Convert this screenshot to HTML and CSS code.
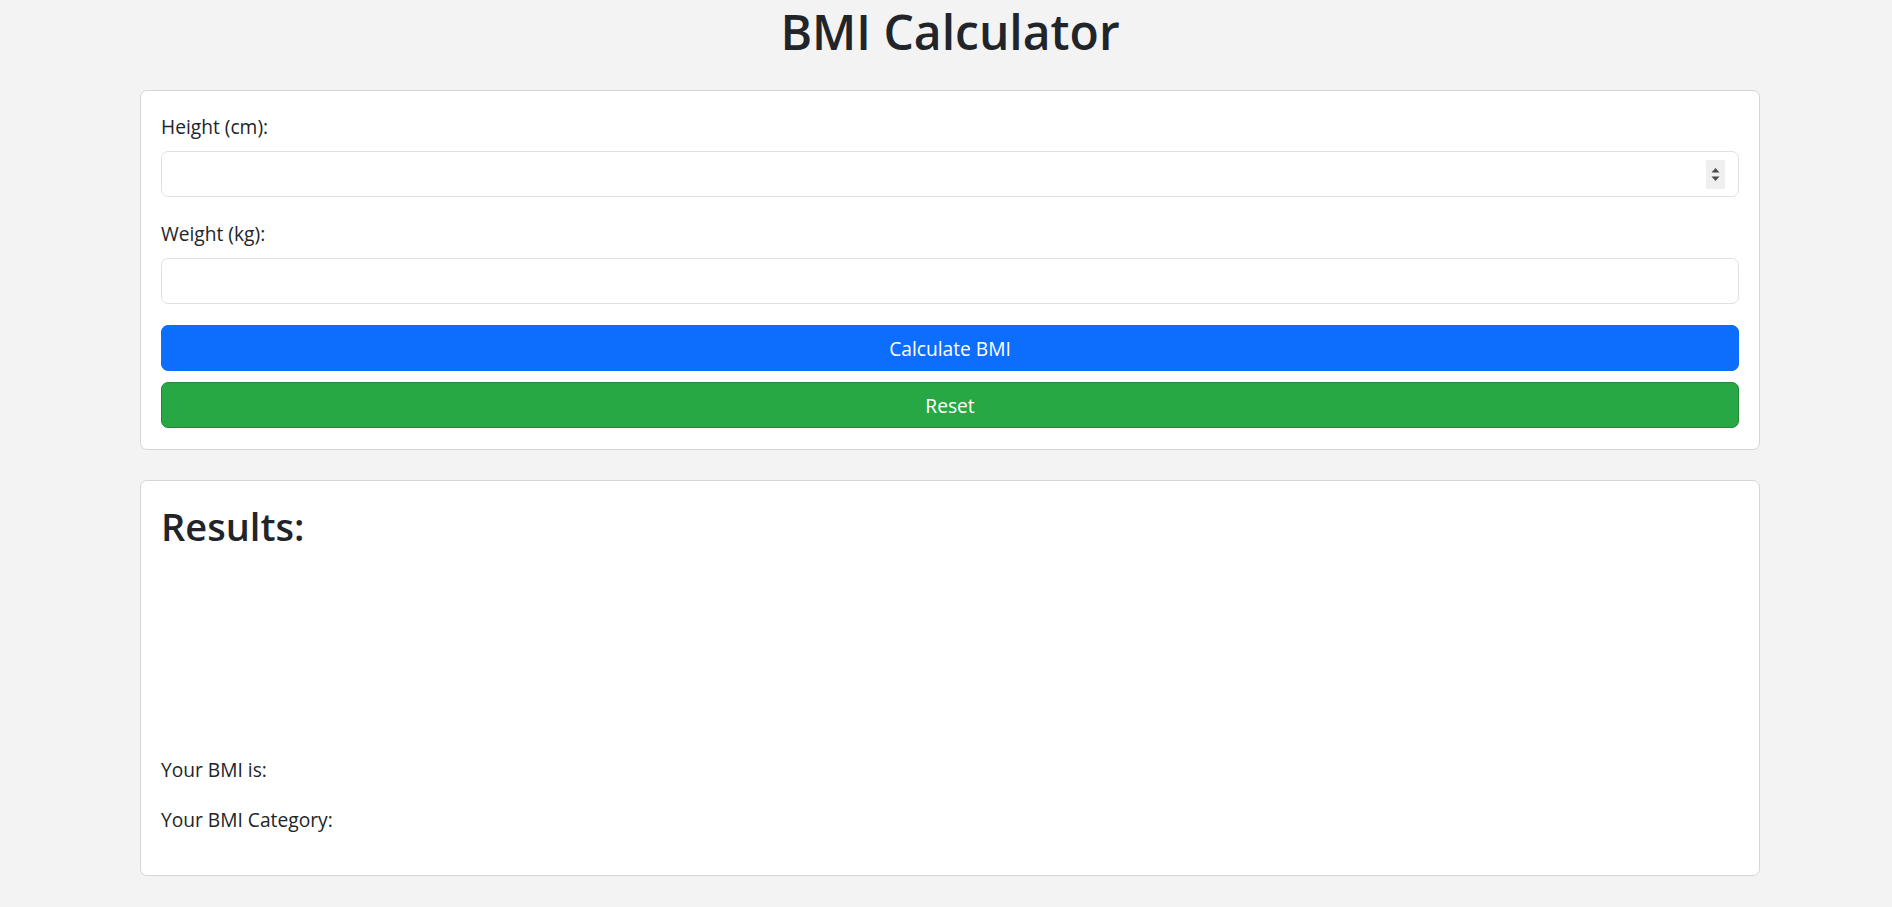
FILE: index.html
```html
<!DOCTYPE html>
<html lang="en">
<head>
<meta charset="utf-8">
<title>BMI Calculator</title>
<link rel="stylesheet" href="styles.css">
</head>
<body>
<div class="page">
  <h1 class="title">BMI Calculator</h1>
  <section class="card form-card">
    <div class="field">
      <label class="label" for="height">Height (cm):</label>
      <div class="input-wrap">
        <input class="input" id="height" type="number">
        <span class="spin" aria-hidden="true">
          <svg width="19" height="29" viewBox="0 0 19 29"><path d="M9.5 8 L13.5 12.5 L5.5 12.5 Z" fill="#4b4b4b"/><path d="M5.5 16.5 L13.5 16.5 L9.5 21 Z" fill="#4b4b4b"/></svg>
        </span>
      </div>
    </div>
    <div class="field">
      <label class="label" for="weight">Weight (kg):</label>
      <div class="input-wrap">
        <input class="input" id="weight" type="number">
      </div>
    </div>
    <div class="actions">
      <button class="btn btn-primary" type="button">Calculate BMI</button>
      <button class="btn btn-success" type="button">Reset</button>
    </div>
  </section>
  <section class="card results">
    <h2 class="results-title">Results:</h2>
    <div class="chart"></div>
    <p class="result-line">Your BMI is: <span class="value"></span></p>
    <p class="result-line">Your BMI Category: <span class="value"></span></p>
  </section>
</div>
</body>
</html>
```

FILE: styles.css
```css
* { box-sizing: border-box; }

html, body {
  margin: 0;
  padding: 0;
}

body {
  background: #f3f3f3;
  color: #212529;
  font-family: "Open Sans", "Noto Sans", "Liberation Sans", sans-serif;
  font-size: 19.2px;
  line-height: 1.5;
}

.page {
  padding: 0 132px 30px 140px;
}

.title {
  margin: 0 0 27px;
  font-size: 48px;
  font-weight: 600;
  line-height: 63px;
  text-align: center;
  color: #212529;
}

.card {
  background: #fff;
  border: 1px solid #d6d6d6;
  border-radius: 7px;
  padding: 19px 20px;
}

.form-card {
  padding-bottom: 21px;
}

.field {
  margin-bottom: 20px;
}

.label {
  display: block;
  line-height: 29px;
  padding-top: 2px;
  margin-bottom: 10px;
}

.input-wrap {
  position: relative;
}

.input {
  display: block;
  width: 100%;
  height: 46px;
  border: 1px solid #dee2e6;
  border-radius: 7px;
  background: #fff;
  padding: 0 14px;
  font: inherit;
  color: #212529;
  -moz-appearance: textfield;
}

.input::-webkit-inner-spin-button,
.input::-webkit-outer-spin-button {
  -webkit-appearance: none;
  margin: 0;
}

.spin {
  position: absolute;
  right: 14px;
  top: 9px;
  width: 19px;
  height: 29px;
  background: #efefef;
  display: block;
}

.spin svg { display: block; }

.actions {
  display: flex;
  flex-direction: column;
  gap: 11px;
  margin-top: 21px;
}

.btn {
  display: block;
  width: 100%;
  height: 46px;
  border-radius: 7px;
  font: inherit;
  color: #fff;
  cursor: pointer;
  padding: 2px 0 0;
}

.btn-primary {
  background: #0d6efd;
  border: 1px solid #0d6efd;
}

.btn-success {
  background: #28a745;
  border: 1px solid #218838;
}

.results {
  margin-top: 30px;
  padding-bottom: 22px;
}

.results-title {
  margin: 3px 0 10px;
  font-size: 38px;
  font-weight: 600;
  line-height: 46px;
}

.chart {
  height: 196px;
}

.result-line {
  margin: 0 0 21px;
  line-height: 29px;
}

.result-line:last-child {
  margin-bottom: 19px;
}
```
